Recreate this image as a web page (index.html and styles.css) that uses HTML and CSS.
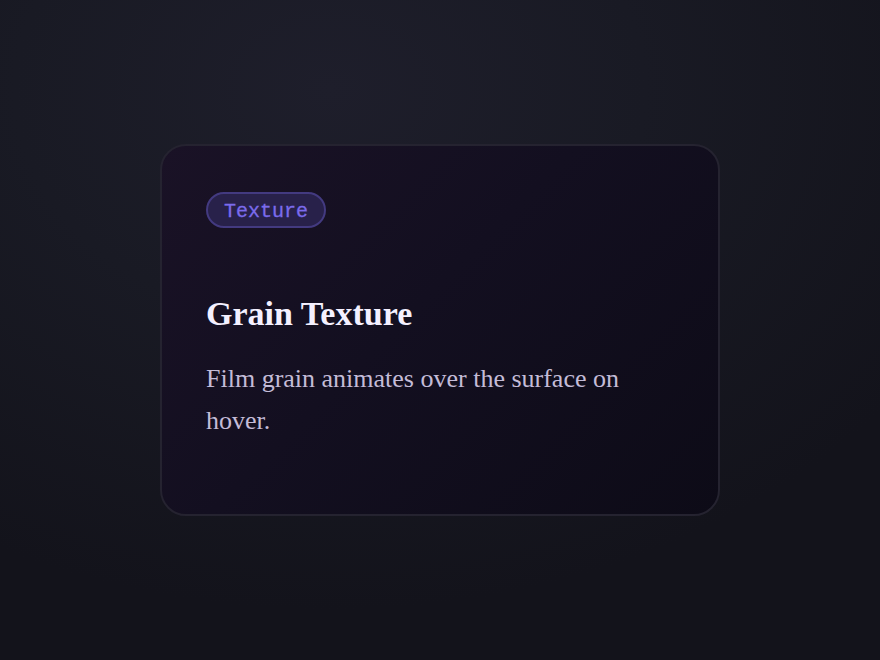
FILE: index.html
```html
<!DOCTYPE html>
<html>
<head>
<meta charset="utf-8">
<link rel="stylesheet" href="styles.css">
</head>
<body>
<div class="stage">
  <div class="card">
    <span class="badge">Texture</span>
    <h2 class="title">Grain Texture</h2>
    <p class="desc">Film grain animates over the surface on hover.</p>
  </div>
</div>
</body>
</html>
```

FILE: styles.css
```css
html, body {
  margin: 0;
  padding: 0;
  height: 100%;
}
body {
  background: radial-gradient(ellipse 700px 520px at 330px 90px, #1e1e2b 0%, #191a24 45%, #13131b 100%);
  background-color: #13131b;
}
.stage {
  height: 660px;
  display: flex;
  align-items: center;
  justify-content: center;
}
.card {
  box-sizing: border-box;
  width: 560px;
  height: 372px;
  border-radius: 26px;
  border: 2px solid #252330;
  background: linear-gradient(135deg, #1a1226 0%, #130f20 45%, #0d0b17 100%);
  padding: 46px 44px;
  display: flex;
  flex-direction: column;
  align-items: flex-start;
}
.badge {
  font-family: "Courier New", "Liberation Mono", monospace;
  font-size: 20px;
  line-height: 22px;
  color: #7b6bec;
  background: #28214a;
  border: 2px solid #433a80;
  border-radius: 18px;
  padding: 7px 16px 3px 16px;
  -webkit-text-stroke: 0.3px #7b6bec;
}
.title {
  font-family: "Liberation Serif", serif;
  font-weight: 700;
  font-size: 34px;
  line-height: 40px;
  color: #f4f0ff;
  margin: 66px 0 0 0;
}
.desc {
  font-family: "Liberation Serif", serif;
  font-size: 26px;
  line-height: 42px;
  color: #c4bcd8;
  margin: 24px 0 0 0;
}
```
